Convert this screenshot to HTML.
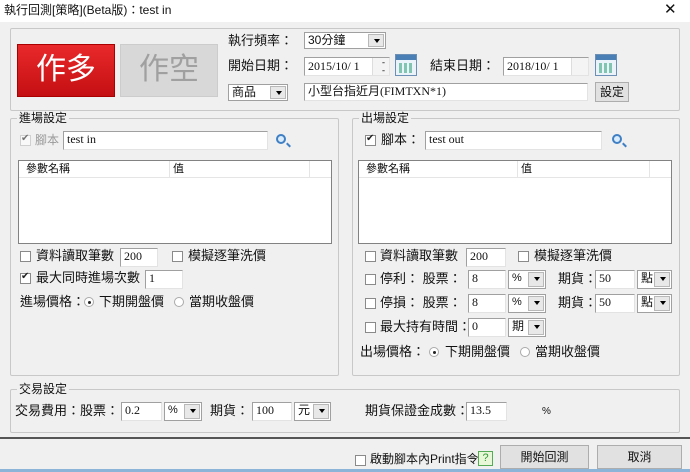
<!DOCTYPE html>
<html><head><meta charset="utf-8"><style>
*{box-sizing:border-box;margin:0;padding:0}
body{width:690px;height:472px;background:#f0f0f0;position:relative;overflow:hidden;font-family:"Liberation Sans","Noto Sans CJK TC",sans-serif;font-size:12px;color:#111}
.a{position:absolute;white-space:nowrap}
.t{position:absolute;white-space:nowrap;line-height:14px}
.grp{position:absolute;border:1px solid #c8c8c8;border-radius:2px}
.gl{position:absolute;background:#f0f0f0;padding:0 2px;line-height:14px;top:-8px;left:6px}
.in{position:absolute;background:#fff;border:1px solid #a0a0a0;border-right-color:#e3e3e3;border-bottom-color:#e3e3e3;font-family:"Liberation Serif","Noto Sans CJK TC",serif;font-size:12px;line-height:15px;padding-left:3px;overflow:hidden}
.sel{position:absolute;background:#fff;border:1px solid #a0a0a0;font-size:12px;line-height:15px;padding-left:3px}
.sel:after{content:"";position:absolute;right:1px;top:1px;bottom:1px;width:14px;background:#e8e8e8;border:1px solid #b8b8b8}
.sel i{position:absolute;right:5px;top:6px;border-left:3px solid transparent;border-right:3px solid transparent;border-top:4px solid #000;z-index:2}
.cb{position:absolute;width:11px;height:11px;border:1px solid #8a8a8a;background:#fff}
.cb.k:after{content:"✔";position:absolute;left:0;top:-3px;font-size:10px;color:#222}
.rd{position:absolute;width:10px;height:10px;border-radius:50%;border:1px solid #aaa;background:#fff}
.rd.k:after{content:"";position:absolute;left:3px;top:3px;width:3px;height:3px;border-radius:50%;background:#222}
.btn{position:absolute;border:1px solid #adadad;background:#e1e1e1;text-align:center}
.cal{position:absolute;width:22px;height:22px;border:1px solid #6b8fb5;background:#eaf2fa}
.cal:before{content:"";position:absolute;left:0;right:0;top:0;height:5px;background:#4a7fb5}
.cal:after{content:"";position:absolute;left:3px;top:8px;width:14px;height:10px;background:repeating-linear-gradient(90deg,#7fc5b0 0 3px,transparent 3px 5px)}
.mag{position:absolute;width:10px;height:10px;border:2px solid #3f7fc4;border-radius:50%;background:#d8ecfb}
.mag:after{content:"";position:absolute;left:8px;top:8px;width:5px;height:2px;background:#3f7fc4;transform:rotate(45deg)}
.list{position:absolute;background:#fff;border:1px solid #828282}
.lh{position:absolute;left:0;right:0;top:0;height:17px;border-bottom:1px solid #e5e5e5;font-size:11px;line-height:16px}
.spin{position:absolute;width:17px;background:#f4f4f4;border-left:1px solid #ddd}
</style></head><body>
<div class="a" style="left:0;top:0;width:690px;height:22px;background:#fff"></div>
<div class="t" style="left:4px;top:3px">執行回測[策略](Beta版)：test in</div>
<div class="t" style="left:664px;top:3px;font-size:15px">✕</div>

<div class="grp" style="left:10px;top:28px;width:670px;height:83px"></div>
<div class="a" style="left:17px;top:44px;width:98px;height:53px;background:linear-gradient(#e9292b,#c40f12);border:1px solid #a00;color:#fff;font-size:30px;text-align:center;line-height:50px">作多</div>
<div class="a" style="left:120px;top:44px;width:98px;height:53px;background:#d8d8d8;border:1px solid #ccc;color:#a0a0a0;font-size:30px;text-align:center;line-height:50px">作空</div>
<div class="t" style="left:228px;top:34px;font-size:13px">執行頻率：</div>
<div class="sel" style="left:304px;top:32px;width:82px;height:17px">30分鐘<i></i></div>
<div class="t" style="left:228px;top:59px;font-size:13px">開始日期：</div>
<div class="in" style="left:304px;top:57px;width:86px;height:19px;line-height:17px">2015/10/ 1<div class="spin" style="right:0;top:0;bottom:0"></div><div class="a" style="right:4px;top:0;font-size:9px;line-height:8px">-<br>-</div></div>
<div class="cal" style="left:395px;top:54px"></div>
<div class="t" style="left:430px;top:59px;font-size:13px">結束日期：</div>
<div class="in" style="left:503px;top:57px;width:86px;height:19px;line-height:17px">2018/10/ 1<div class="spin" style="right:0;top:0;bottom:0"></div></div>
<div class="cal" style="left:595px;top:54px"></div>
<div class="sel" style="left:228px;top:84px;width:60px;height:17px">商品<i></i></div>
<div class="in" style="left:304px;top:83px;width:284px;height:18px;font-size:12px">小型台指近月(FIMTXN*1)</div>
<div class="btn" style="left:595px;top:82px;width:34px;height:20px;line-height:18px">設定</div>

<div class="grp" style="left:10px;top:118px;width:329px;height:258px"><div class="gl">進場設定</div></div>
<div class="cb k" style="left:20px;top:135px;border-color:#bbb;opacity:.6"></div>
<div class="t" style="left:35px;top:133px;color:#999">腳本</div>
<div class="in" style="left:63px;top:131px;width:205px;height:19px">test in</div>
<div class="mag" style="left:276px;top:134px"></div>
<div class="list" style="left:18px;top:160px;width:314px;height:84px"><div class="lh"><span class="a" style="left:7px">參數名稱</span><span class="a" style="left:154px">值</span><div class="a" style="left:150px;top:0;height:16px;border-left:1px solid #e5e5e5"></div><div class="a" style="left:290px;top:0;height:16px;border-left:1px solid #e5e5e5"></div></div></div>
<div class="cb" style="left:20px;top:251px"></div><div class="t" style="left:36px;top:249px;font-size:13px">資料讀取筆數</div>
<div class="in" style="left:120px;top:248px;width:38px;height:19px">200</div>
<div class="cb" style="left:172px;top:251px"></div><div class="t" style="left:188px;top:249px;font-size:13px">模擬逐筆洗價</div>
<div class="cb k" style="left:20px;top:273px"></div><div class="t" style="left:36px;top:271px;font-size:13px">最大同時進場次數</div>
<div class="in" style="left:145px;top:270px;width:38px;height:19px">1</div>
<div class="t" style="left:20px;top:295px;font-size:13px">進場價格：</div>
<div class="rd k" style="left:84px;top:297px"></div><div class="t" style="left:99px;top:295px;font-size:13px">下期開盤價</div>
<div class="rd" style="left:174px;top:297px"></div><div class="t" style="left:189px;top:295px;font-size:13px">當期收盤價</div>

<div class="grp" style="left:352px;top:118px;width:328px;height:258px"><div class="gl">出場設定</div></div>
<div class="cb k" style="left:365px;top:135px"></div>
<div class="t" style="left:381px;top:133px;font-size:13px">腳本：</div>
<div class="in" style="left:425px;top:131px;width:177px;height:19px">test out</div>
<div class="mag" style="left:612px;top:134px"></div>
<div class="list" style="left:358px;top:160px;width:314px;height:84px"><div class="lh"><span class="a" style="left:7px">參數名稱</span><span class="a" style="left:162px">值</span><div class="a" style="left:158px;top:0;height:16px;border-left:1px solid #e5e5e5"></div><div class="a" style="left:290px;top:0;height:16px;border-left:1px solid #e5e5e5"></div></div></div>
<div class="cb" style="left:365px;top:251px"></div><div class="t" style="left:380px;top:249px;font-size:13px">資料讀取筆數</div>
<div class="in" style="left:466px;top:248px;width:40px;height:19px">200</div>
<div class="cb" style="left:518px;top:251px"></div><div class="t" style="left:534px;top:249px;font-size:13px">模擬逐筆洗價</div>

<div class="cb" style="left:365px;top:274px"></div><div class="t" style="left:380px;top:272px;font-size:13px">停利：&nbsp;股票：</div>
<div class="in" style="left:468px;top:270px;width:38px;height:19px">8</div>
<div class="sel" style="left:508px;top:270px;width:38px;height:19px;font-size:11px">%<i></i></div>
<div class="t" style="left:558px;top:272px;font-size:13px">期貨：</div>
<div class="in" style="left:595px;top:270px;width:40px;height:19px">50</div>
<div class="sel" style="left:637px;top:270px;width:35px;height:19px">點<i></i></div>

<div class="cb" style="left:365px;top:298px"></div><div class="t" style="left:380px;top:296px;font-size:13px">停損：&nbsp;股票：</div>
<div class="in" style="left:468px;top:294px;width:38px;height:19px">8</div>
<div class="sel" style="left:508px;top:294px;width:38px;height:19px;font-size:11px">%<i></i></div>
<div class="t" style="left:558px;top:296px;font-size:13px">期貨：</div>
<div class="in" style="left:595px;top:294px;width:40px;height:19px">50</div>
<div class="sel" style="left:637px;top:294px;width:35px;height:19px">點<i></i></div>

<div class="cb" style="left:365px;top:322px"></div><div class="t" style="left:380px;top:320px;font-size:13px">最大持有時間：</div>
<div class="in" style="left:468px;top:318px;width:38px;height:19px">0</div>
<div class="sel" style="left:508px;top:318px;width:38px;height:19px">期<i></i></div>
<div class="t" style="left:360px;top:345px;font-size:13px">出場價格：</div>
<div class="rd k" style="left:429px;top:347px"></div><div class="t" style="left:445px;top:345px;font-size:13px">下期開盤價</div>
<div class="rd" style="left:520px;top:347px"></div><div class="t" style="left:535px;top:345px;font-size:13px">當期收盤價</div>

<div class="grp" style="left:10px;top:389px;width:670px;height:44px"><div class="gl">交易設定</div></div>
<div class="t" style="left:15px;top:404px;font-size:13px">交易費用：股票：</div>
<div class="in" style="left:121px;top:402px;width:41px;height:19px">0.2</div>
<div class="sel" style="left:164px;top:402px;width:38px;height:19px;font-size:11px">%<i></i></div>
<div class="t" style="left:210px;top:404px;font-size:13px">期貨：</div>
<div class="in" style="left:252px;top:402px;width:40px;height:19px">100</div>
<div class="sel" style="left:294px;top:402px;width:37px;height:19px">元<i></i></div>
<div class="t" style="left:365px;top:404px;font-size:13px">期貨保證金成數：</div>
<div class="in" style="left:466px;top:402px;width:41px;height:19px">13.5</div>
<div class="t" style="left:542px;top:405px;font-size:10px">%</div>

<div class="a" style="left:0;top:437px;width:690px;height:2px;background:#555"></div>
<div class="a" style="left:0;top:439px;width:690px;height:33px;background:#f0f0f0"></div>
<div class="cb" style="left:355px;top:455px"></div>
<div class="t" style="left:370px;top:452px">啟動腳本內Print指令</div>
<div class="a" style="left:478px;top:451px;width:15px;height:15px;border:1px solid #5a5;background:#e8f7d8;color:#393;font-size:11px;text-align:center;line-height:13px">?</div>
<div class="btn" style="left:500px;top:445px;width:89px;height:24px;line-height:22px">開始回測</div>
<div class="btn" style="left:597px;top:445px;width:85px;height:24px;line-height:22px">取消</div>
<div class="a" style="left:0;top:469px;width:690px;height:3px;background:#8cb4d8"></div>
</body></html>
